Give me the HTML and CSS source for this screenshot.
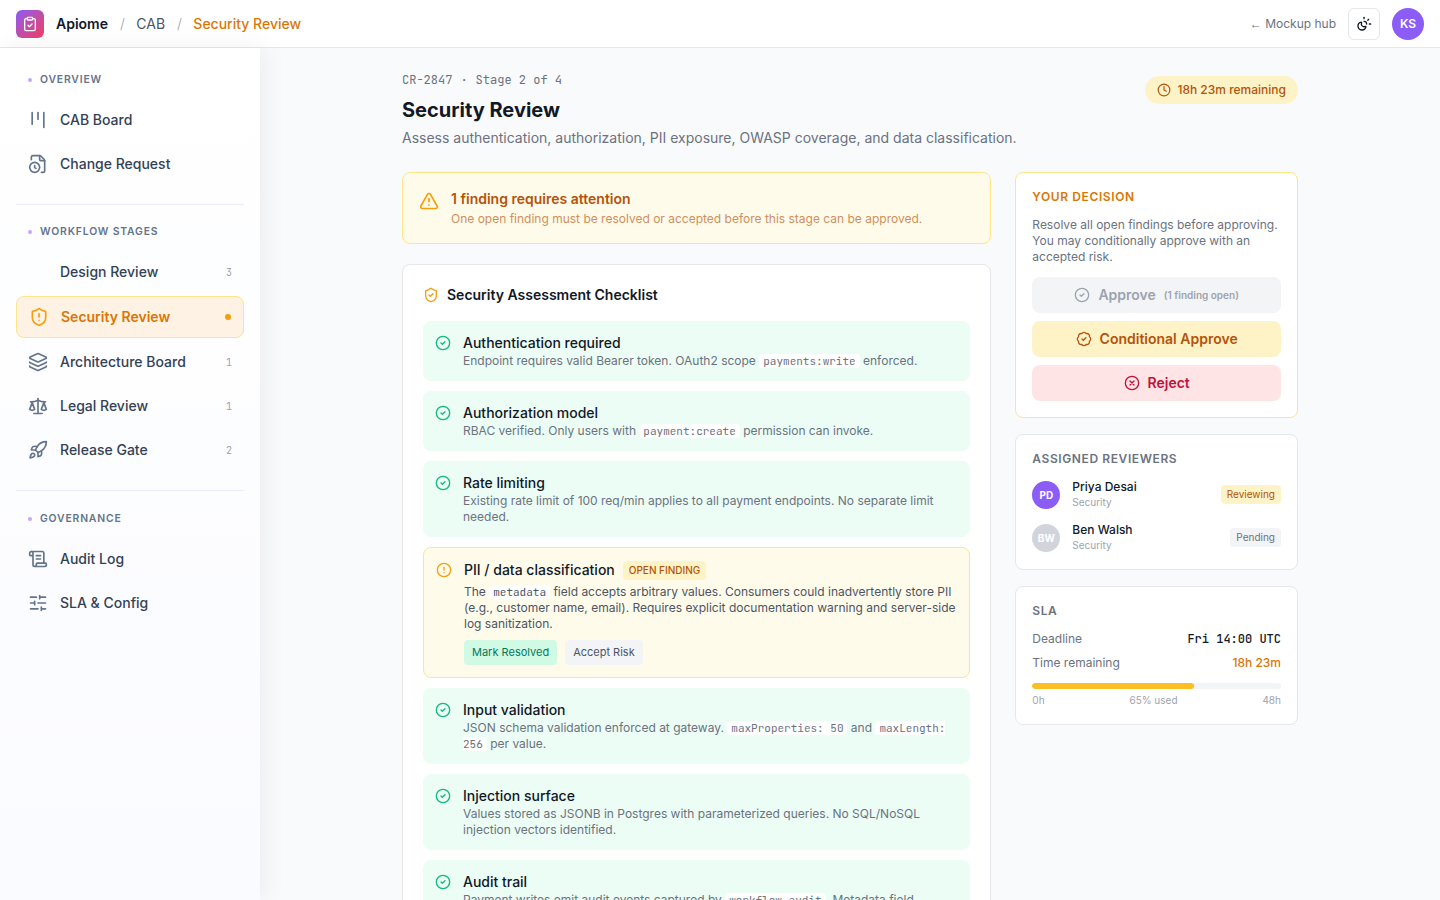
FILE: index.html
```html
<!DOCTYPE html>
<html lang="en">
<head>
<meta charset="utf-8">
<title>Security Review</title>
<link rel="stylesheet" href="styles.css">
</head>
<body>
<svg class="defs" width="0" height="0">
  <symbol id="check-circle" viewBox="0 0 24 24"><circle cx="12" cy="12" r="10"/><path d="m9 12 2 2 4-4"/></symbol>
  <symbol id="clipboard" viewBox="0 0 24 24"><rect width="8" height="4" x="8" y="2" rx="1"/><path d="M16 4h2a2 2 0 0 1 2 2v14a2 2 0 0 1-2 2H6a2 2 0 0 1-2-2V6a2 2 0 0 1 2-2h2"/><path d="m9 14 2 2 4-4"/></symbol>
  <symbol id="kanban" viewBox="0 0 24 24"><path d="M5 3v14"/><path d="M12 3v8"/><path d="M19 3v18"/></symbol>
  <symbol id="file-clock" viewBox="0 0 24 24"><path d="M16 22h2a2 2 0 0 0 2-2V8a2.4 2.4 0 0 0-.706-1.706l-3.588-3.588A2.4 2.4 0 0 0 14 2H6a2 2 0 0 0-2 2v2.85"/><path d="M14 2v5a1 1 0 0 0 1 1h5"/><circle cx="8" cy="16" r="6"/><path d="M8 14v2.2l1.6 1"/></symbol>
  <symbol id="shield-alert" viewBox="0 0 24 24"><path d="M20 13c0 5-3.5 7.5-7.66 8.95a1 1 0 0 1-.67-.01C7.5 20.5 4 18 4 13V6a1 1 0 0 1 1-1c2 0 4.5-1.2 6.24-2.72a1.17 1.17 0 0 1 1.52 0C14.51 3.81 17 5 19 5a1 1 0 0 1 1 1z"/><path d="M12 8v4"/><path d="M12 16h.01"/></symbol>
  <symbol id="shield-check" viewBox="0 0 24 24"><path d="M20 13c0 5-3.5 7.5-7.66 8.95a1 1 0 0 1-.67-.01C7.5 20.5 4 18 4 13V6a1 1 0 0 1 1-1c2 0 4.5-1.2 6.24-2.72a1.17 1.17 0 0 1 1.52 0C14.51 3.81 17 5 19 5a1 1 0 0 1 1 1z"/><path d="m9 12 2 2 4-4"/></symbol>
  <symbol id="layers" viewBox="0 0 24 24"><path d="M12.83 2.18a2 2 0 0 0-1.66 0L2.6 6.08a1 1 0 0 0 0 1.83l8.58 3.91a2 2 0 0 0 1.66 0l8.58-3.9a1 1 0 0 0 0-1.83z"/><path d="M2 12a1 1 0 0 0 .58.91l8.6 3.91a2 2 0 0 0 1.65 0l8.58-3.9A1 1 0 0 0 22 12"/><path d="M2 17a1 1 0 0 0 .58.91l8.6 3.91a2 2 0 0 0 1.65 0l8.58-3.9A1 1 0 0 0 22 17"/></symbol>
  <symbol id="scale" viewBox="0 0 24 24"><path d="M12 3v18"/><path d="m19 8 3 8a5 5 0 0 1-6 0zV7"/><path d="M3 7h1a17 17 0 0 0 8-2 17 17 0 0 0 8 2h1"/><path d="m5 8 3 8a5 5 0 0 1-6 0zV7"/><path d="M7 21h10"/></symbol>
  <symbol id="rocket" viewBox="0 0 24 24"><path d="M4.5 16.5c-1.5 1.26-2 5-2 5s3.74-.5 5-2c.71-.84.7-2.13-.09-2.91a2.18 2.18 0 0 0-2.91-.09z"/><path d="m12 15-3-3a22 22 0 0 1 2-3.95A12.88 12.88 0 0 1 22 2c0 2.72-.78 7.5-6 11a22.35 22.35 0 0 1-4 2z"/><path d="M9 12H4s.55-3.03 2-4c1.62-1.08 5 0 5 0"/><path d="M12 15v5s3.03-.55 4-2c1.08-1.62 0-5 0-5"/></symbol>
  <symbol id="scroll" viewBox="0 0 24 24"><path d="M15 12h-5"/><path d="M15 8h-5"/><path d="M19 17V5a2 2 0 0 0-2-2H4"/><path d="M8 21h12a2 2 0 0 0 2-2v-1a1 1 0 0 0-1-1H11a1 1 0 0 0-1 1v1a2 2 0 1 1-4 0V5a2 2 0 1 0-4 0v2a1 1 0 0 0 1 1h3"/></symbol>
  <symbol id="sliders" viewBox="0 0 24 24"><path d="M10 5H3M12 19H3M14 3v4M16 17v4M21 12h-9M21 19h-5M21 5h-7M8 10v4M8 12H3"/></symbol>
  <symbol id="sun-moon" viewBox="0 0 24 24"><path d="M12 2v2"/><path d="M14.837 16.385a6 6 0 1 1-7.223-7.222c.624-.147.97.66.715 1.248a4 4 0 0 0 5.26 5.259c.589-.255 1.396.09 1.248.715"/><path d="M16 12a4 4 0 0 0-4-4"/><path d="m19 5-1.256 1.256"/><path d="M20 12h2"/></symbol>
  <symbol id="clock" viewBox="0 0 24 24"><circle cx="12" cy="12" r="10"/><path d="M12 6v6l4 2"/></symbol>
  <symbol id="triangle" viewBox="0 0 24 24"><path d="m21.73 18-8-14a2 2 0 0 0-3.48 0l-8 14A2 2 0 0 0 4 21h16a2 2 0 0 0 1.73-3"/><path d="M12 9v4"/><path d="M12 17h.01"/></symbol>
  <symbol id="alert-circle" viewBox="0 0 24 24"><circle cx="12" cy="12" r="10"/><path d="M12 8v4"/><path d="M12 16h.01"/></symbol>
  <symbol id="badge-check" viewBox="0 0 24 24"><path d="M3.85 8.62a4 4 0 0 1 4.78-4.77 4 4 0 0 1 6.74 0 4 4 0 0 1 4.78 4.78 4 4 0 0 1 0 6.74 4 4 0 0 1-4.77 4.78 4 4 0 0 1-6.75 0 4 4 0 0 1-4.78-4.77 4 4 0 0 1 0-6.76Z"/><path d="m9 12 2 2 4-4"/></symbol>
  <symbol id="x-circle" viewBox="0 0 24 24"><circle cx="12" cy="12" r="10"/><path d="m15 9-6 6M9 9l6 6"/></symbol>
</svg>
<header class="topbar">
  <div class="logo"><svg class="icon s16"><use href="#clipboard"/></svg></div>
  <nav class="crumbs"><b>Apiome</b><i>/</i><span>CAB</span><i>/</i><span class="here">Security Review</span></nav>
  <a class="hub"><span class="arrow">←</span> Mockup hub</a>
  <button class="toggle"><svg class="icon s16"><use href="#sun-moon"/></svg></button>
  <div class="avatar">KS</div>
</header>
<div class="shell">
  <aside class="sidebar">
    <section class="group">
      <h4>Overview</h4>
      <a><svg class="icon s20"><use href="#kanban"/></svg><span>CAB Board</span></a>
      <a><svg class="icon s20"><use href="#file-clock"/></svg><span>Change Request</span></a>
    </section>
    <section class="group">
      <h4>Workflow Stages</h4>
      <a><svg class="icon s20"></svg><span>Design Review</span><em>3</em></a>
      <a class="active"><svg class="icon s20"><use href="#shield-alert"/></svg><span>Security Review</span><u class="dot"></u></a>
      <a><svg class="icon s20"><use href="#layers"/></svg><span>Architecture Board</span><em>1</em></a>
      <a><svg class="icon s20"><use href="#scale"/></svg><span>Legal Review</span><em>1</em></a>
      <a><svg class="icon s20"><use href="#rocket"/></svg><span>Release Gate</span><em>2</em></a>
    </section>
    <section class="group">
      <h4>Governance</h4>
      <a><svg class="icon s20"><use href="#scroll"/></svg><span>Audit Log</span></a>
      <a><svg class="icon s20"><use href="#sliders"/></svg><span>SLA &amp; Config</span></a>
    </section>
  </aside>
  <main class="main">
    <div class="page">
      <div class="head">
        <div>
          <p class="ref">CR-2847 <span>·</span> Stage 2 of 4</p>
          <h1>Security Review</h1>
          <p class="sub">Assess authentication, authorization, PII exposure, OWASP coverage, and data classification.</p>
        </div>
        <div class="timer"><svg class="icon s14"><use href="#clock"/></svg>18h 23m remaining</div>
      </div>
      <div class="columns">
        <div class="left">
          <div class="notice">
            <svg class="icon s20"><use href="#triangle"/></svg>
            <div><h3>1 finding requires attention</h3><p>One open finding must be resolved or accepted before this stage can be approved.</p></div>
          </div>
          <div class="card checklist">
            <h2><svg class="icon s16"><use href="#shield-check"/></svg>Security Assessment Checklist</h2>
            <div class="item"><svg class="icon s16"><use href="#check-circle"/></svg><div><h3>Authentication required</h3><p>Endpoint requires valid Bearer token. OAuth2 scope <code>payments:write</code> enforced.</p></div></div>
            <div class="item"><svg class="icon s16"><use href="#check-circle"/></svg><div><h3>Authorization model</h3><p>RBAC verified. Only users with <code>payment:create</code> permission can invoke.</p></div></div>
            <div class="item"><svg class="icon s16"><use href="#check-circle"/></svg><div><h3>Rate limiting</h3><p>Existing rate limit of 100 req/min applies to all payment endpoints. No separate limit needed.</p></div></div>
            <div class="item open"><svg class="icon s16"><use href="#alert-circle"/></svg><div>
              <h3>PII / data classification<span class="tag">OPEN FINDING</span></h3>
              <p>The <code>metadata</code> field accepts arbitrary values. Consumers could inadvertently store PII (e.g., customer name, email). Requires explicit documentation warning and server-side log sanitization.</p>
              <div class="acts"><button class="resolve">Mark Resolved</button><button>Accept Risk</button></div>
            </div></div>
            <div class="item"><svg class="icon s16"><use href="#check-circle"/></svg><div><h3>Input validation</h3><p>JSON schema validation enforced at gateway. <code>maxProperties: 50</code> and <code>maxLength: 256</code> per value.</p></div></div>
            <div class="item"><svg class="icon s16"><use href="#check-circle"/></svg><div><h3>Injection surface</h3><p>Values stored as JSONB in Postgres with parameterized queries. No SQL/NoSQL injection vectors identified.</p></div></div>
            <div class="item"><svg class="icon s16"><use href="#check-circle"/></svg><div><h3>Audit trail</h3><p>Payment writes emit audit events captured by <code>workflow_audit</code>. Metadata field included.</p></div></div>
          </div>
        </div>
        <div class="right">
          <div class="card side decision">
            <h4>Your Decision</h4>
            <p>Resolve all open findings before approving. You may conditionally approve with an accepted risk.</p>
            <button class="off"><svg class="icon s16"><use href="#check-circle"/></svg>Approve<small>(1 finding open)</small></button>
            <button class="cond"><svg class="icon s16"><use href="#badge-check"/></svg>Conditional Approve</button>
            <button class="reject"><svg class="icon s16"><use href="#x-circle"/></svg>Reject</button>
          </div>
          <div class="card side">
            <h4>Assigned Reviewers</h4>
            <div class="person"><div class="face">PD</div><div class="who"><b>Priya Desai</b><span>Security</span></div><span class="state busy">Reviewing</span></div>
            <div class="person"><div class="face idle">BW</div><div class="who"><b>Ben Walsh</b><span>Security</span></div><span class="state">Pending</span></div>
          </div>
          <div class="card side sla">
            <h4>SLA</h4>
            <div class="row"><span>Deadline</span><b class="mono">Fri 14:00 UTC</b></div>
            <div class="row"><span>Time remaining</span><b class="warn">18h 23m</b></div>
            <div class="bar"><div style="width:65%"></div></div>
            <div class="scale"><span>0h</span><span>65% used</span><span>48h</span></div>
          </div>
        </div>
      </div>
    </div>
  </main>
</div>
</body>
</html>
```
FILE: styles.css
```css
* { box-sizing: border-box; margin: 0; padding: 0; }
body { height: 900px; overflow: hidden; display: flex; flex-direction: column; background: #f9fafb; color: #111827; font: 14px/20px Inter, sans-serif; }
button { border: 0; font: inherit; }
.defs { position: absolute; }
.icon { fill: none; stroke: currentColor; stroke-width: 2; stroke-linecap: round; stroke-linejoin: round; flex: none; }
.s14 { width: 14px; height: 14px; }
.s16 { width: 16px; height: 16px; }
.s20 { width: 20px; height: 20px; }

.topbar { height: 48px; flex: none; display: flex; align-items: center; gap: 12px; padding: 0 16px; background: #fff; border-bottom: 1px solid #e5e7eb; }
.logo { width: 28px; height: 28px; border-radius: 6px; background: linear-gradient(135deg, #8b5cf6, #f43f5e); color: #fff; display: grid; place-items: center; }
.crumbs { display: flex; gap: 12px; flex: 1; color: #4b5563; }
.crumbs b { font-weight: 600; color: #111827; }
.crumbs i { font-style: normal; font-weight: 300; margin-right: -.6px; color: #9ca3af; }
.crumbs .here { color: #d97706; font-weight: 500; }
.hub { font-size: 12px; color: #6b7280; }
.arrow { font-family: "Liberation Sans", sans-serif; }
.toggle { width: 32px; height: 32px; border: 1px solid #e5e7eb; border-radius: 6px; background: #fff; color: #111827; display: grid; place-items: center; }
.avatar { width: 32px; height: 32px; border-radius: 50%; background: #8b5cf6; color: #fff; font-size: 12px; font-weight: 600; display: grid; place-items: center; }

.shell { flex: 1; min-height: 0; display: flex; }
.sidebar { width: 260px; flex: none; padding: 16px; background: linear-gradient(#fff, #fafbff); box-shadow: 4px 0 24px rgba(0, 0, 0, .06); }
.group + .group { border-top: 1px solid #ede9fe; margin-top: 20px; padding-top: 12px; }
.group h4 { height: 30px; margin-bottom: 5.6px; padding: 1.2px 0 0 12px; display: flex; align-items: center; gap: 8px; font-size: 10.4px; font-weight: 600; letter-spacing: .83px; text-transform: uppercase; color: #64748b; }
.group h4::before { content: ""; width: 4px; height: 4px; border-radius: 50%; background: #c4a5fd; }
.group a { height: 40px; padding: 0 12px; margin-bottom: 4px; display: flex; align-items: center; gap: 12px; border-radius: 8px; font-weight: 500; color: #334155; }
.group a:last-child { margin-bottom: 0; }
.group a .icon { color: #64748b; }
.group a span { flex: 1; }
.group em { font: 10px "JetBrains Mono", "Liberation Mono", monospace; color: #9ca3af; }
.group a.active { height: 42px; border: 1px solid #fde68a; background: #fdf2e4; color: #d97706; font-weight: 600; }
.group a.active .icon { color: #f59e0b; }
.dot { width: 6px; height: 6px; border-radius: 50%; background: #f59e0b; }

.main { flex: 1; min-width: 0; display: flex; justify-content: center; padding: 24px 20px; }
.page { width: 896px; }
.head { display: flex; justify-content: space-between; align-items: flex-start; margin-bottom: 24px; }
.ref { font: 12px/16px "JetBrains Mono", "Liberation Mono", monospace; color: #6b7280; }
.ref span { margin: 0 .8px; }
.head h1 { font-size: 20px; line-height: 28px; font-weight: 700; margin: 8px 0 4px; }
.sub { color: #6b7280; }
.timer { margin-top: 4px; height: 28px; padding: 0 12px; display: flex; align-items: center; gap: 6px; border-radius: 14px; background: #fef3c7; color: #b45309; font-size: 12px; font-weight: 500; }
.columns { display: grid; grid-template-columns: repeat(3, 1fr); gap: 24px; align-items: start; }
.left { grid-column: span 2; }
.notice { height: 72px; margin-bottom: 20px; padding: 16px; display: flex; gap: 12px; border: 1px solid #fde68a; border-radius: 8px; background: #fffbeb; }
.notice .icon { color: #f59e0b; margin-top: 2px; }
.notice h3 { font-size: 14px; font-weight: 600; color: #b45309; }
.notice p { font-size: 12px; line-height: 16px; margin-top: 2px; color: #d08f5c; }
.card { background: #fff; border: 1px solid #e5e7eb; border-radius: 8px; }
.checklist { padding: 20px; }
.checklist h2 { font-size: 14px; font-weight: 600; display: flex; align-items: center; gap: 8px; margin-bottom: 16px; }
.checklist h2 .icon { color: #f59e0b; }
.item { padding: 12px; margin-bottom: 10px; display: flex; gap: 12px; border-radius: 8px; background: #ecfdf5; }
.item > .icon { color: #10b981; margin-top: 2px; }
.item h3 { font-size: 14px; font-weight: 500; display: flex; align-items: center; }
.item p { font-size: 12px; line-height: 16px; color: #6b7280; }
code { font: 11px "JetBrains Mono", "Liberation Mono", monospace; background: #fff; padding: 0 4px; border-radius: 3px; }
.item.open { border: 1px solid #fde68a; background: #fffbeb; }
.item.open > .icon { color: #f59e0b; }
.item.open p { color: #4b5563; margin-top: 4px; }
.tag { margin-left: 8px; padding: 2px 6px; font-size: 10px; line-height: 15px; border-radius: 4px; background: #fef3c7; color: #b45309; }
.acts { display: flex; gap: 8px; margin-top: 8px; }
.acts button { height: 25px; padding: 0 8px 1px; border-radius: 4px; font-size: 11px; background: #f3f4f6; color: #4b5563; }
.acts .resolve { background: #d1fae5; color: #047857; }

.side { padding: 16px; margin-bottom: 16px; }
.side h4 { font-size: 12px; line-height: 16px; font-weight: 600; letter-spacing: .6px; text-transform: uppercase; color: #6b7280; margin-bottom: 12px; }
.decision { border-color: #fde68a; }
.decision h4 { color: #d97706; }
.decision p { font-size: 12px; line-height: 16px; color: #6b7280; margin-bottom: 12px; }
.decision button { width: 100%; height: 36px; border-radius: 8px; display: flex; align-items: center; justify-content: center; gap: 8px; font-weight: 600; }
.decision button + button { margin-top: 8px; }
.decision small { font-size: 10px; }
.off { background: #f3f4f6; color: #9ca3af; }
.cond { background: #fef3c7; color: #b45309; }
.reject { background: #ffe4e6; color: #be123c; }
.person { display: flex; align-items: center; gap: 12px; height: 31px; }
.person + .person { margin-top: 12px; }
.face { width: 28px; height: 28px; border-radius: 50%; background: #8b5cf6; color: #fff; font-size: 10px; font-weight: 700; display: grid; place-items: center; }
.face.idle { background: #d1d5db; }
.who { flex: 1; display: flex; flex-direction: column; font-size: 10px; line-height: 15px; color: #9ca3af; }
.who b { font-size: 12px; line-height: 16px; font-weight: 500; color: #111827; }
.state { padding: 2px 6px; font-size: 10px; line-height: 15px; border-radius: 4px; background: #f3f4f6; color: #6b7280; }
.state.busy { background: #fef3c7; color: #b45309; }
.row { display: flex; justify-content: space-between; font-size: 12px; line-height: 16px; color: #6b7280; margin-bottom: 8px; }
.row b { font-weight: 500; color: #111827; }
.row .mono { font-family: "JetBrains Mono", "Liberation Mono", monospace; }
.row .warn { color: #d97706; }
.bar { height: 6px; margin-top: 12px; border-radius: 3px; background: #f3f4f6; overflow: hidden; }
.bar div { height: 6px; border-radius: 3px; background: #fbbf24; }
.scale { display: flex; justify-content: space-between; margin-top: 4px; font-size: 10px; line-height: 15px; color: #9ca3af; }
```
